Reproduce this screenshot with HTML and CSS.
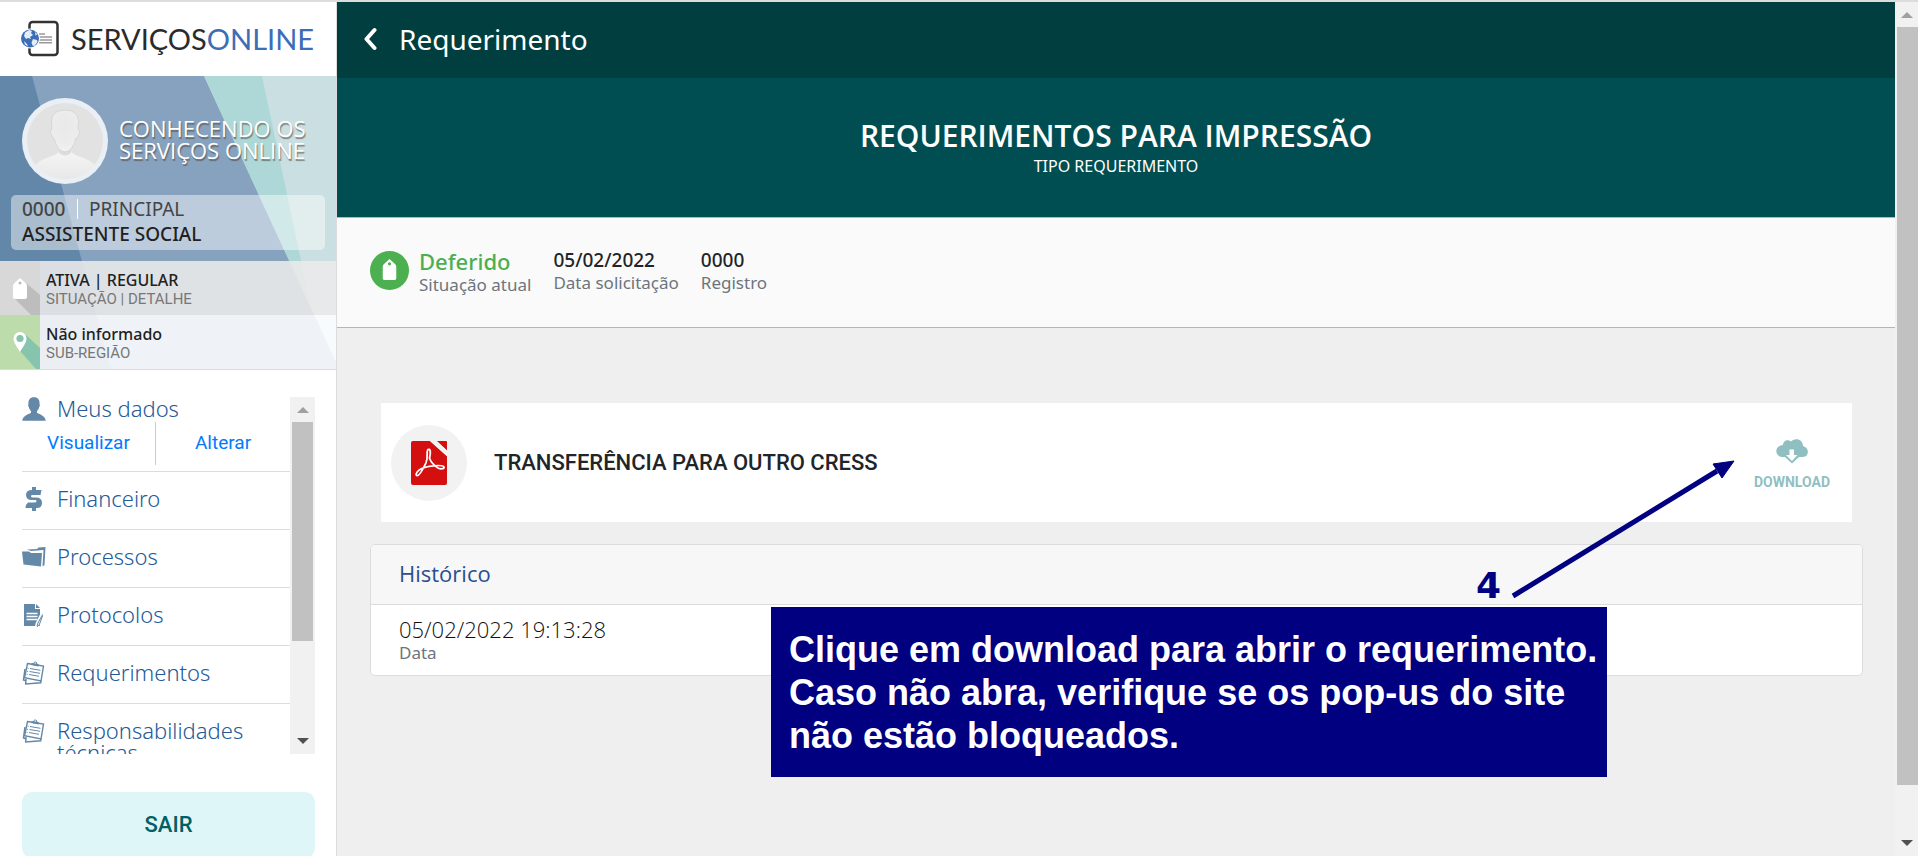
FILE: index.html
```html
<!DOCTYPE html>
<html lang="pt-BR">
<head>
<meta charset="utf-8">
<title>Serviços Online - Requerimento</title>
<link rel="stylesheet" href="styles.css">
</head>
<body>
<svg class="defs" width="0" height="0" aria-hidden="true">
  <defs>
    <symbol id="clipboard" viewBox="0 0 24 24">
      <path d="M3 8 1.500 19l3 1M4 18l-.3 5 15-1.200v-2.500" fill="none" stroke="#6488a8" stroke-width="1.5"/>
      <path d="M5.500 2.500 21.500 5 19 20 2.500 16.800z" fill="#fff" stroke="#6488a8" stroke-width="1.400"/>
      <path d="M9 4 9.500 2.200l2-.1c.3-2.600 3.800-2 3.700.6l1.800.8-.4 2z" fill="#6488a8"/>
      <circle cx="13.200" cy="2" r=".8" fill="#fff"/>
      <path d="m8 7.500 10.500 1.800M7.500 10.500 18 12.300M7 13.500l10 1.800M5.600 7.200l1 .2M5 10.200l1 .2M4.500 13.200l1 .2" stroke="#6488a8" stroke-width="1"/>
    </symbol>
    <symbol id="tag" viewBox="0 0 14 21">
      <path d="M7 0 12.500 5Q14 6.500 14 8v11q0 2-2 2H2q-2 0-2-2V8Q0 6.500 1.500 5z" fill="#fff"/>
    </symbol>
  </defs>
</svg>
<div class="page">
  <aside class="sidebar">
    <a class="logo" href="#">
      <svg width="38" height="38" viewBox="0 0 38 38" aria-hidden="true">
        <rect x="8.500" y="2" width="28" height="33" rx="3" fill="#fff" stroke="#333" stroke-width="2.500"/>
        <path d="M18 14h6M18 17h13M18 20h13M18 22.800h13" stroke="#999" stroke-width="1.500"/>
        <circle cx="9" cy="18.500" r="10" fill="#fff"/>
        <circle cx="9" cy="18.500" r="9" fill="#3c6db7"/>
        <path d="M4 12.500 8 10l3 1-1 2 2 2-3 2 1 2-3-1-2 1-2-3zM12 19l4 1 .5 2-3 4-2-.5-1-3zM3 21l3 3 1 2.500-3-2zM14 12l2.500 2.500-2 1z" fill="#e4ecf7"/>
      </svg>
      <span class="logo-text">SERVIÇOS<span class="logo-accent">ONLINE</span></span>
    </a>
    <section class="profile">
      <svg class="profile-bg" viewBox="0 0 336 293" preserveAspectRatio="none" aria-hidden="true">
        <rect width="336" height="293" fill="#86a2bf"/>
        <path d="M0 0h32l79 293H0z" fill="#6387a8"/>
        <path d="M204 0h132v286z" fill="#cadfe1"/>
        <path d="M204 0h58l49 232z" fill="#add8d7"/>
      </svg>
      <div class="profile-head">
        <svg class="avatar" viewBox="0 0 86 86" role="img" aria-label="Foto">
          <defs>
            <radialGradient id="skin" cx=".5" cy=".4" r=".7"><stop offset="0" stop-color="#e9e9e9"/><stop offset=".6" stop-color="#ececec"/><stop offset="1" stop-color="#f6f6f6"/></radialGradient>
            <linearGradient id="bust" x2="0" y2="1"><stop offset="0" stop-color="#f8f8f8"/><stop offset="1" stop-color="#e8e8e8"/></linearGradient>
            <clipPath id="round"><circle cx="43" cy="43" r="38"/></clipPath>
          </defs>
          <circle cx="43" cy="43" r="43" fill="#eaeff6"/>
          <circle cx="43" cy="43" r="38" fill="#e2e2e2"/>
          <g clip-path="url(#round)">
            <path d="M37 46v7q-1 3-7 5-14 4-19 12l3 11h58l3-11q-5-8-19-12-6-2-7-5v-7z" fill="url(#bust)"/>
            <path d="M37 49q6 7 12 0v6q-6 5-12 0z" fill="#dcdcdc"/>
            <path d="M43 12q13 0 13.500 11l-.5 8q2.500 1 1 5-1 4-3 4-3 13-11 14-8-1-11-14-2 0-3-4-1.500-4 1-5l-.5-8Q30 12 43 12z" fill="url(#skin)" stroke="#d6d6d6"/>
          </g>
        </svg>
        <h2 class="profile-name">CONHECENDO OS SERVIÇOS ONLINE</h2>
      </div>
      <div class="role">
        <div class="role-line"><span class="role-id">0000</span><span class="role-kind">PRINCIPAL</span></div>
        <div class="role-name">ASSISTENTE SOCIAL</div>
      </div>
      <div class="fact fact-status">
        <svg class="fact-icon" viewBox="0 0 40 54" aria-hidden="true">
          <rect width="40" height="54" fill="#d8d8d8"/>
          <path d="m26 22 14 12v20h-9L14 37z" fill="#bdbdbd"/>
          <use href="#tag" x="13" y="17" width="14" height="21"/>
          <circle cx="20" cy="22" r="1.500" fill="#bbb"/>
        </svg>
        <div class="fact-text"><div class="fact-value">ATIVA | REGULAR</div><div class="fact-label">SITUAÇÃO | DETALHE</div></div>
      </div>
      <div class="fact fact-region">
        <svg class="fact-icon" viewBox="0 0 40 54" aria-hidden="true">
          <rect width="40" height="54" fill="#bddcab"/>
          <path d="m26 20 14 13v21h-4L20 36z" fill="#86c4ad"/>
          <path d="M20 17a6.500 6.500 0 0 1 6.500 6.500C26.500 28 22 33 20 37c-2-4-6.500-9-6.500-13.500A6.500 6.500 0 0 1 20 17z" fill="#fff"/>
          <circle cx="20" cy="23.500" r="3.600" fill="#86c4ad"/>
        </svg>
        <div class="fact-text"><div class="fact-value">Não informado</div><div class="fact-label">SUB-REGIÃO</div></div>
      </div>
    </section>
    <div class="menu-wrap">
      <nav class="menu">
        <div class="item item-open">
          <a class="item-link" href="#">
            <svg class="item-icon" viewBox="0 0 24 24" aria-hidden="true"><path d="M12 .3c4 0 6 2.700 5.500 7 .6.300.6 1.700-.2 2.500-.5 2-1.300 3.400-2.300 4.200v1.800c1.500 1.700 7.500 1.700 8.800 7.900H.2c1.300-6.200 7.300-6.200 8.800-7.900V14c-1-.8-1.800-2.200-2.300-4.200-.8-.8-.8-2.200-.2-2.500C6 3 8 .3 12 .3z" fill="#6488a8"/></svg>
            <span>Meus dados</span>
          </a>
          <div class="sub"><a href="#">Visualizar</a><a href="#">Alterar</a></div>
        </div>
        <a class="item item-link" href="#">
          <svg class="item-icon" viewBox="0 0 24 24" aria-hidden="true"><path d="M10 0h4v3h5.500l-1 5h-8q-1.500 0-1.500 1.200t1.500 1.300h3.500q6 0 6 5.500T14 21v3h-4v-3H3.500l.5-3 2-2.500h7q1.500 0 1.500-1.300T13 13h-3Q4 13 4 8t6-5z" fill="#6488a8"/></svg>
          <span>Financeiro</span>
        </a>
        <a class="item item-link" href="#">
          <svg class="item-icon" viewBox="0 0 24 24" aria-hidden="true"><path d="M5 4.500 15 4l1.500-1.500L23.500 2 22.500 20l-2 1.500L21.500 5 9 6z" fill="#6488a8"/><path d="M0 6.500h7l2 1.500h11L19 21.500 1.500 19.500z" fill="#6488a8"/></svg>
          <span>Processos</span>
        </a>
        <a class="item item-link" href="#">
          <svg class="item-icon" viewBox="0 0 24 24" aria-hidden="true"><path d="M2 1h11v5h5v17H2z" fill="#6488a8"/><path d="m14 1 4 4h-4z" fill="#6488a8"/><path d="M4.500 10.500h11M4.500 13.500h11M4.500 16.500h11" stroke="#fff" stroke-width="1.300"/><path d="m20.500 11-5 10-.5 3" stroke="#fff" stroke-width="4"/><path d="m20.500 11.500-5 9.500-.3 2.500 2-1.500 3.500-9.500" fill="#fff" stroke="#6488a8"/></svg>
          <span>Protocolos</span>
        </a>
        <a class="item item-link" href="#">
          <svg class="item-icon" aria-hidden="true"><use href="#clipboard"/></svg>
          <span>Requerimentos</span>
        </a>
        <a class="item item-link" href="#">
          <svg class="item-icon" aria-hidden="true"><use href="#clipboard"/></svg>
          <span>Responsabilidades técnicas</span>
        </a>
      </nav>
      <div class="bar menu-bar" aria-hidden="true"><i class="up"></i><i class="thumb"></i><i class="down"></i></div>
    </div>
    <button class="logout" type="button">SAIR</button>
  </aside>

  <main class="main">
    <header class="topbar">
      <button class="back" type="button" aria-label="Voltar"><svg width="14" height="24" viewBox="0 0 14 24" aria-hidden="true"><path d="M11.500 3 3.500 12l8 9" fill="none" stroke="#fff" stroke-width="4" stroke-linecap="round" stroke-linejoin="round"/></svg></button>
      <h1 class="topbar-title">Requerimento</h1>
    </header>
    <section class="hero">
      <h2 class="hero-title">REQUERIMENTOS PARA IMPRESSÃO</h2>
      <p class="hero-sub">TIPO REQUERIMENTO</p>
    </section>
    <section class="summary">
      <div class="state">
        <svg width="39" height="39" viewBox="0 0 39 39" aria-hidden="true"><circle cx="19.500" cy="19.500" r="19.500" fill="#4caf50"/><use href="#tag" x="12.500" y="7" width="14" height="23"/><circle cx="19.500" cy="12.800" r="1.600" fill="#4caf50"/></svg>
        <div><div class="state-value">Deferido</div><div class="label">Situação atual</div></div>
      </div>
      <div><div class="value">05/02/2022</div><div class="label">Data solicitação</div></div>
      <div><div class="value">0000</div><div class="label">Registro</div></div>
    </section>
    <div class="content">
      <article class="file">
        <span class="file-badge">
          <svg width="36" height="44" viewBox="0 0 36 46" preserveAspectRatio="none" aria-hidden="true">
            <path d="M2 0h17l17 16v28q0 2-2 2H2q-2 0-2-2V2Q0 0 2 0z" fill="#d40f10"/>
            <path d="M26 0h9q1 0 1 1v9z" fill="#d40f10"/>
            <path d="M19 0h6l11 10v6z" fill="#f2f2f2"/>
            <path d="M17 9c2.500-1.500 3 3 1.500 9 1.500 4 5 8 9 10.500 2 1 6 .5 5.500-1-.5-2.500-7-2-13-1.200-5 .7-9 2-12 4.200-3 2.500-3.500 5.500-2 5.800 2.500.5 6-7 9-13.500C17.500 17 15 10.500 17 9z" fill="none" stroke="#fff" stroke-width="1.800"/>
          </svg>
        </span>
        <h3 class="file-title">TRANSFERÊNCIA PARA OUTRO CRESS</h3>
        <a class="download" href="#">
          <svg width="32" height="25" viewBox="0 0 32 25" aria-hidden="true"><path d="M7 6C7 1.500 12 0 15 2.500 20-2 27 1 27 7c6.500 1.500 6.500 10.500 0 11h-4l-7 6.500L9 18H6C-2 17-1.500 6.500 7 6z" fill="#90bfc2"/><path d="M13.500 10.500h4.500v5.500h3.500L16 22l-6-6h3.500z" fill="#fff"/></svg>
          <span>DOWNLOAD</span>
        </a>
      </article>
      <section class="history">
        <h3 class="history-title">Histórico</h3>
        <div class="history-row"><div class="history-value">05/02/2022 19:13:28</div><div class="label">Data</div></div>
      </section>
      <div class="note">Clique em download para abrir o requerimento.<br>Caso não abra, verifique se os pop-us do site<br>não estão bloqueados.</div>
      <span class="step">4</span>
      <svg class="arrow" width="226" height="142" viewBox="0 0 226 142" aria-hidden="true"><path d="m3 136 204-125" stroke="#000080" stroke-width="5"/><path d="m224 1-21 3 9 14z" fill="#000080" stroke="#000080"/></svg>
    </div>
  </main>
  <div class="bar page-bar" aria-hidden="true"><i class="up"></i><i class="thumb"></i><i class="down"></i></div>
</div>
</body>
</html>
```
FILE: styles.css
```css
* { box-sizing: border-box; }
body { margin: 0; font-family: "Noto Sans", "Open Sans", sans-serif; color: #212529; background: #efefef; }
h1, h2, h3, p { margin: 0; font-weight: 400; }
a { text-decoration: none; }
button { border: 0; padding: 0; font: inherit; cursor: pointer; }
svg { display: block; flex: none; }
.defs { position: absolute; }

.page { display: grid; grid-template-columns: 337px 1fr 23px; height: 100vh; overflow: hidden; border-top: 2px solid #dcdcdc; }

/* Sidebar */
.sidebar { min-height: 0; display: flex; flex-direction: column; overflow: hidden; background: #fff; border-right: 1px solid #dcdcdc; }
.logo { flex: none; display: flex; align-items: center; gap: 12px; height: 74px; padding-left: 21px; color: #2b2b2b; }
.logo-text { font: 29px/36px Lato, sans-serif; }
.logo-accent { color: #3c6db7; }

.profile { flex: none; position: relative; z-index: 0; border-bottom: 1px solid #dcdcdc; }
.profile-bg { position: absolute; inset: 0; width: 100%; height: 100%; z-index: -1; }
.profile-head { display: flex; align-items: center; gap: 11px; padding: 22px 11px 11px 22px; }
.avatar { width: 86px; height: 86px; }
.profile-name { padding-bottom: 4px; font: 500 22px/22px "Open Sans", "Noto Sans", sans-serif; color: #fff; text-shadow: 1px 2px 1px rgba(80, 70, 60, .6); }
.role { margin: 0 11px 11px; padding: 4px 11px; height: 55px; border-radius: 5px; background: rgba(255, 255, 255, .45); }
.role-line { display: flex; line-height: 20px; font-size: 19px; color: #444; }
.role-id { width: 56px; border-right: 1px solid #fff; font-weight: 500; }
.role-kind { padding-left: 11px; }
.role-name { font-size: 19px; line-height: 30px; font-weight: 500; color: #212121; }
.fact { display: flex; align-items: center; gap: 6px; height: 54px; }
.fact-status { background: rgba(236, 234, 234, .88); }
.fact-region { background: rgba(255, 255, 255, .87); }
.fact-icon { width: 40px; height: 54px; }
.fact-text { padding-top: 2px; }
.fact-value { font-size: 16px; line-height: 20px; font-weight: 500; color: #212121; }
.fact-label { font: 15px/18px Roboto, sans-serif; color: #777; }

.menu-wrap { flex: none; display: flex; height: 357px; margin: 27px 21px 0 22px; }
.menu { flex: 1; overflow: hidden; }
.item { border-bottom: 1px solid #dcdcdc; }
.item-link { display: flex; gap: 11px; font-size: 22px; line-height: 22px; font-weight: 300; color: #235a97; }
.item.item-link { padding: 15px 0 20px; }
.item-icon { width: 24px; height: 24px; margin-bottom: -2px; }
.sub { display: flex; margin: 3px 0 6px; }
.sub a { flex: 1 1 0; font: 19px/42px Roboto, sans-serif; height: 43px; text-align: center; color: #007bff; }
.sub a:first-child { flex: 0 0 134px; border-right: 1px solid #ccc; }

.bar { display: flex; flex-direction: column; align-items: center; background: #f1f1f1; }
.bar .up, .bar .down { flex: none; width: 0; height: 0; border: 6px solid transparent; }
.bar .up { margin: 4px 0 9px; border-bottom-color: #a0a0a0; }
.bar .down { margin: auto 0 4px; border-top-color: #505050; }
.bar .thumb { background: #c1c1c1; }
.menu-bar { width: 25px; }
.menu-bar .thumb { width: 21px; height: 219px; }
.page-bar .thumb { width: 21px; height: 758px; margin-left: 2px; }

.logout { flex: none; margin: 38px 21px 0 22px; height: 66px; border-radius: 10px; background: #def6f8; color: #006064; font: 500 22px/26px Roboto, sans-serif; }

/* Main area */
.main { min-width: 0; overflow: hidden; }
.topbar { display: flex; align-items: center; gap: 22px; height: 76px; padding: 0 26px 2px; background: #003e40; color: #fff; }
.back { background: none; }
.topbar-title { font-size: 28px; line-height: 36px; }
.hero { height: 140px; padding-top: 41px; text-align: center; color: #fff; background: #004e52; border-bottom: 1px solid #b5b5b5; }
.hero-title { font: 600 30px/34px "Open Sans", "Noto Sans", sans-serif; }
.hero-sub { font-size: 16px; line-height: 26px; }
.summary { display: flex; align-items: flex-start; gap: 22px; height: 110px; padding: 30px 33px; background: #fafafa; border-bottom: 1px solid #b5b5b5; }
.state { display: flex; gap: 10px; }
.state svg { margin-top: 3px; }
.state-value { font-size: 22px; line-height: 26px; font-weight: 500; color: #4caf50; }
.value { font-size: 19px; line-height: 24px; font-weight: 500; }
.label { font-size: 17px; line-height: 22px; font-weight: 400; color: #6c757d; }

.content { position: relative; padding: 75px 32px 0 33px; }
.file { display: flex; align-items: center; height: 119px; margin: 0 11px 22px; padding: 0 22px 0 10px; background: #fff; }
.file-badge { display: grid; place-items: center; width: 76px; height: 76px; border-radius: 50%; background: #f2f2f2; }
.file-title { margin: 0 auto 0 27px; font: 500 22px/30px Roboto, sans-serif; }
.download { display: flex; flex-direction: column; align-items: center; gap: 8px; padding-top: 6px; font: 700 14px/20px Roboto, sans-serif; color: #90bfc2; }
.history { border: 1px solid #dcdcdc; border-radius: 5px; background: #fff; overflow: hidden; }
.history-title { padding: 14px 28px 17px; font: 500 22px/28px "Open Sans", "Noto Sans", sans-serif; color: #2a4f8e; background: #f7f7f7; border-bottom: 1px solid #dcdcdc; }
.history-row { padding: 11px 28px; }
.history-value { font: 300 22px/26px "Open Sans", "Noto Sans", sans-serif; color: #111; }

.note { position: absolute; left: 434px; top: 279px; width: 836px; height: 170px; padding: 21px 18px; background: #000080; color: #fff; font: 700 36px/43px "Liberation Sans", Arial, sans-serif; white-space: nowrap; }
.step { position: absolute; left: 1139px; top: 237px; font: 700 36px/42px "DejaVu Sans", Verdana, sans-serif; color: #000080; }
.arrow { position: absolute; left: 1173px; top: 132px; }
```
